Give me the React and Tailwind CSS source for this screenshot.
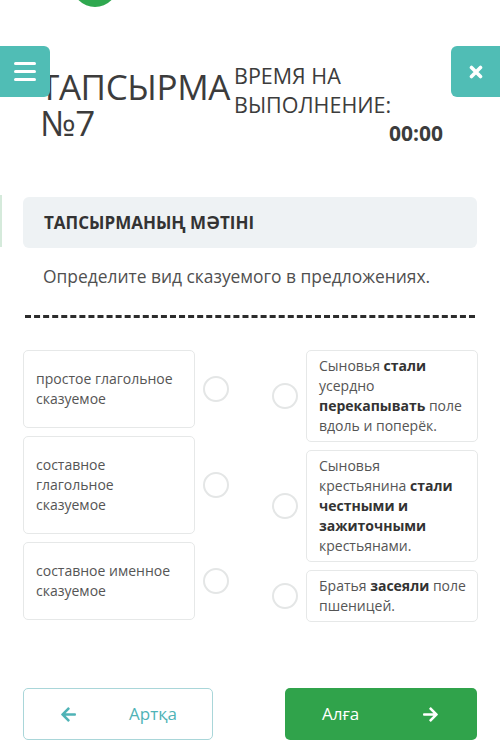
import { FaArrowLeft, FaArrowRight } from "react-icons/fa";

const leftOptions = [
  "простое глагольное сказуемое",
  "составное глагольное сказуемое",
  "составное именное сказуемое",
];

const rightOptions = [
  <>
    Сыновья <b>стали</b> усердно <b>перекапывать</b> поле вдоль и поперёк.
  </>,
  <>
    Сыновья крестьянина <b>стали честными и зажиточными</b> крестьянами.
  </>,
  <>
    Братья <b>засеяли</b> поле пшеницей.
  </>,
];

function Radio() {
  return (
    <div className="w-[26px] h-[26px] shrink-0 rounded-full border-2 border-[#e4e6e6] bg-white" />
  );
}

export default function App() {
  return (
    <div
      className="w-[500px] h-[750px] overflow-hidden bg-white text-[#555] flex flex-col"
      style={{ fontFamily: '"Open Sans", "Noto Sans", sans-serif' }}
    >
      {/* top logo circle, mostly scrolled off */}
      <div className="-mt-[39px] ml-[72px] w-[46px] h-[46px] rounded-full bg-[#2fa84f]" />

      {/* header */}
      <div className="relative mt-[39px] flex items-start h-[140px]">
        <button className="absolute left-0 top-0 z-10 w-[50px] h-[51px] rounded-r-[6px] bg-[#50bdb5] flex flex-col items-center justify-center gap-[4.5px]">
          <span className="block w-[22px] h-[3.5px] bg-white rounded-sm" />
          <span className="block w-[22px] h-[3.5px] bg-white rounded-sm" />
          <span className="block w-[22px] h-[3.5px] bg-white rounded-sm" />
        </button>

        <h1 className="ml-[40px] mt-[23px] w-[194px] text-[35px] leading-[36px] font-normal text-[#3c3c3c] tracking-[-0.4px]">
          ТАПСЫРМА
          <br />
          №7
        </h1>

        <div className="mt-[15px] w-[209px] text-[#3c3c3c]">
          <div className="text-[21.5px] leading-[29px]">
            ВРЕМЯ НА
            <br />
            ВЫПОЛНЕНИЕ:
          </div>
          <div className="text-right text-[21px] leading-[28px] font-bold">
            00:00
          </div>
        </div>

        <button className="ml-auto w-[49px] h-[51px] rounded-l-[6px] bg-[#50bdb5] flex items-center justify-center">
          <svg width="14" height="14" viewBox="0 0 14 14">
            <path
              d="M2.5 2.5 L11.5 11.5 M11.5 2.5 L2.5 11.5"
              stroke="white"
              strokeWidth="3.6"
              strokeLinecap="round"
            />
          </svg>
        </button>
      </div>

      {/* task text */}
      <div className="relative mt-[11px]">
        <div className="absolute left-0 -top-[2px] w-[2px] h-[52px] bg-[#d5eadb]" />
        <div className="mx-[23px] h-[51px] rounded-[6px] bg-[#eef2f4] flex items-center px-[21px]">
          <h2 className="text-[17px] font-bold text-[#333]">
            ТАПСЫРМАНЫҢ МӘТІНІ
          </h2>
        </div>
      </div>

      <p className="mt-[16px] ml-[43px] text-[17.4px] leading-[24px] text-[#505050]">
        Определите вид сказуемого в предложениях.
      </p>

      <div className="mx-[25px] mt-[27px] border-t-[3px] border-dashed border-[#2c2c2c]" />

      {/* matching options */}
      <div className="mt-[32px] mx-[23px] flex justify-between text-[14px] leading-[20px]">
        <div className="flex flex-col gap-2 w-[206px]">
          {leftOptions.map((t, i) => (
            <div key={i} className="flex items-center gap-2">
              <div className="w-[172px] rounded-[5px] border border-[#e6e8e8] py-[18px] pl-[12px] pr-[20px]">
                {t}
              </div>
              <Radio />
            </div>
          ))}
        </div>

        <div className="flex flex-col gap-2 w-[206px] mr-[-1px]">
          {rightOptions.map((t, i) => (
            <div key={i} className="flex items-center gap-2">
              <Radio />
              <div className="w-[173px] rounded-[5px] border border-[#e6e8e8] py-[5px] pl-[12px] pr-[9px] [&_b]:font-bold [&_b]:text-[#333]">
                {t}
              </div>
            </div>
          ))}
        </div>
      </div>

      {/* navigation */}
      <div className="mt-auto mb-[10px] mx-[23px] flex justify-between">
        <button className="w-[190px] h-[52px] rounded-[5px] border border-[#a9d6d9] bg-white flex items-center pl-[36px] text-[#4fb3b6]">
          <FaArrowLeft size={17} />
          <span className="ml-[52px] text-[17px]">Артқа</span>
        </button>
        <button className="w-[192px] h-[52px] rounded-[5px] bg-[#30a34b] flex items-center pl-[37px] pr-[38px] text-white">
          <span className="text-[17px]">Алға</span>
          <FaArrowRight size={17} className="ml-auto" />
        </button>
      </div>
    </div>
  );
}
